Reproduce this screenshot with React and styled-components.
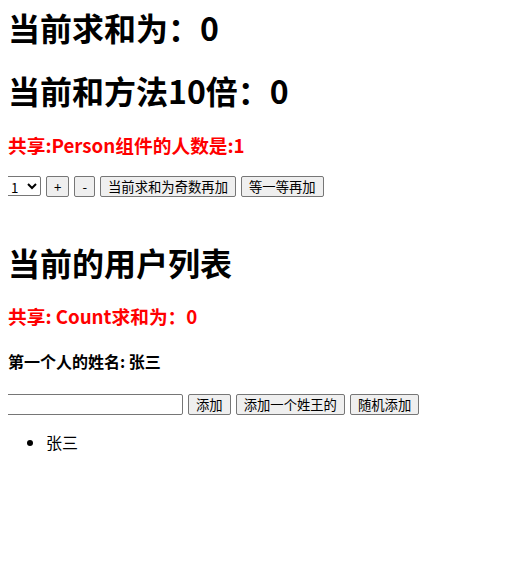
import styled, { createGlobalStyle } from 'styled-components';

const GlobalStyle = createGlobalStyle`
    body {
        margin: 8px;
        background: #ffffff;
        color: #000000;
        font-family: 'Noto Sans CJK SC', 'Noto Sans', sans-serif;
        font-size: 16px;
        line-height: 1.32;
    }
`;

const Section = styled.div`
    padding-bottom: ${({ $tail }) => ($tail ? '23px' : '0')};
`;

const Title = styled.h1`
    font-size: 32px;
    font-weight: 700;
    line-height: 42px;
    margin: ${({ $first }) => ($first ? '-2px' : '21.44px')} 0 21.44px;
`;

const Shared = styled.h3`
    font-size: 18.72px;
    font-weight: 700;
    line-height: 24px;
    color: #ff0000;
    margin: 18.72px 0;
`;

const Name = styled.h4`
    font-size: 16px;
    font-weight: 700;
    line-height: 23px;
    margin: 21.28px 0;
`;

const Controls = styled.div`
    display: flex;
    align-items: center;
    gap: 5px;
    height: 21px;
`;

const Picker = styled.select`
    box-sizing: border-box;
    width: 35px;
    height: 20px;
    margin-left: -2px;
    padding: 0;
    font-family: 'Noto Sans CJK SC', sans-serif;
    font-size: 13.33px;
    border: 1px solid #767676;
    border-radius: 2px;
    background: #ffffff;
`;

const Button = styled.button`
    box-sizing: border-box;
    height: 21px;
    padding: 0 7px;
    font-family: 'Noto Sans CJK SC', sans-serif;
    font-size: 13.33px;
    line-height: 17px;
    color: #000000;
    background: #efefef;
    border: 1px solid #767676;
    border-radius: 2px;
`;

const NameInput = styled.input`
    box-sizing: border-box;
    width: 177px;
    height: 21px;
    margin-left: -2px;
    padding: 1px 2px;
    font-family: 'Noto Sans CJK SC', sans-serif;
    font-size: 13.33px;
    border: 1px solid #767676;
    border-radius: 2px;
`;

const People = styled.ul`
    margin: 17px 0;
    padding-left: 38px;
    list-style: disc;
`;

const Person = styled.li`
    line-height: 21px;
`;

export default function App() {
    return (
        <>
            <GlobalStyle />
            <Section $tail>
                <Title $first>当前求和为：0</Title>
                <Title>当前和方法10倍：0</Title>
                <Shared>共享:Person组件的人数是:1</Shared>
                <Controls>
                    <Picker defaultValue="1">
                        <option value="1">1</option>
                        <option value="2">2</option>
                        <option value="3">3</option>
                    </Picker>
                    <Button>+</Button>
                    <Button>-</Button>
                    <Button>当前求和为奇数再加</Button>
                    <Button>等一等再加</Button>
                </Controls>
            </Section>
            <Section>
                <Title>当前的用户列表</Title>
                <Shared>共享: Count求和为：0</Shared>
                <Name>第一个人的姓名: 张三</Name>
                <Controls>
                    <NameInput type="text" />
                    <Button>添加</Button>
                    <Button>添加一个姓王的</Button>
                    <Button>随机添加</Button>
                </Controls>
                <People>
                    <Person>张三</Person>
                </People>
            </Section>
        </>
    );
}
